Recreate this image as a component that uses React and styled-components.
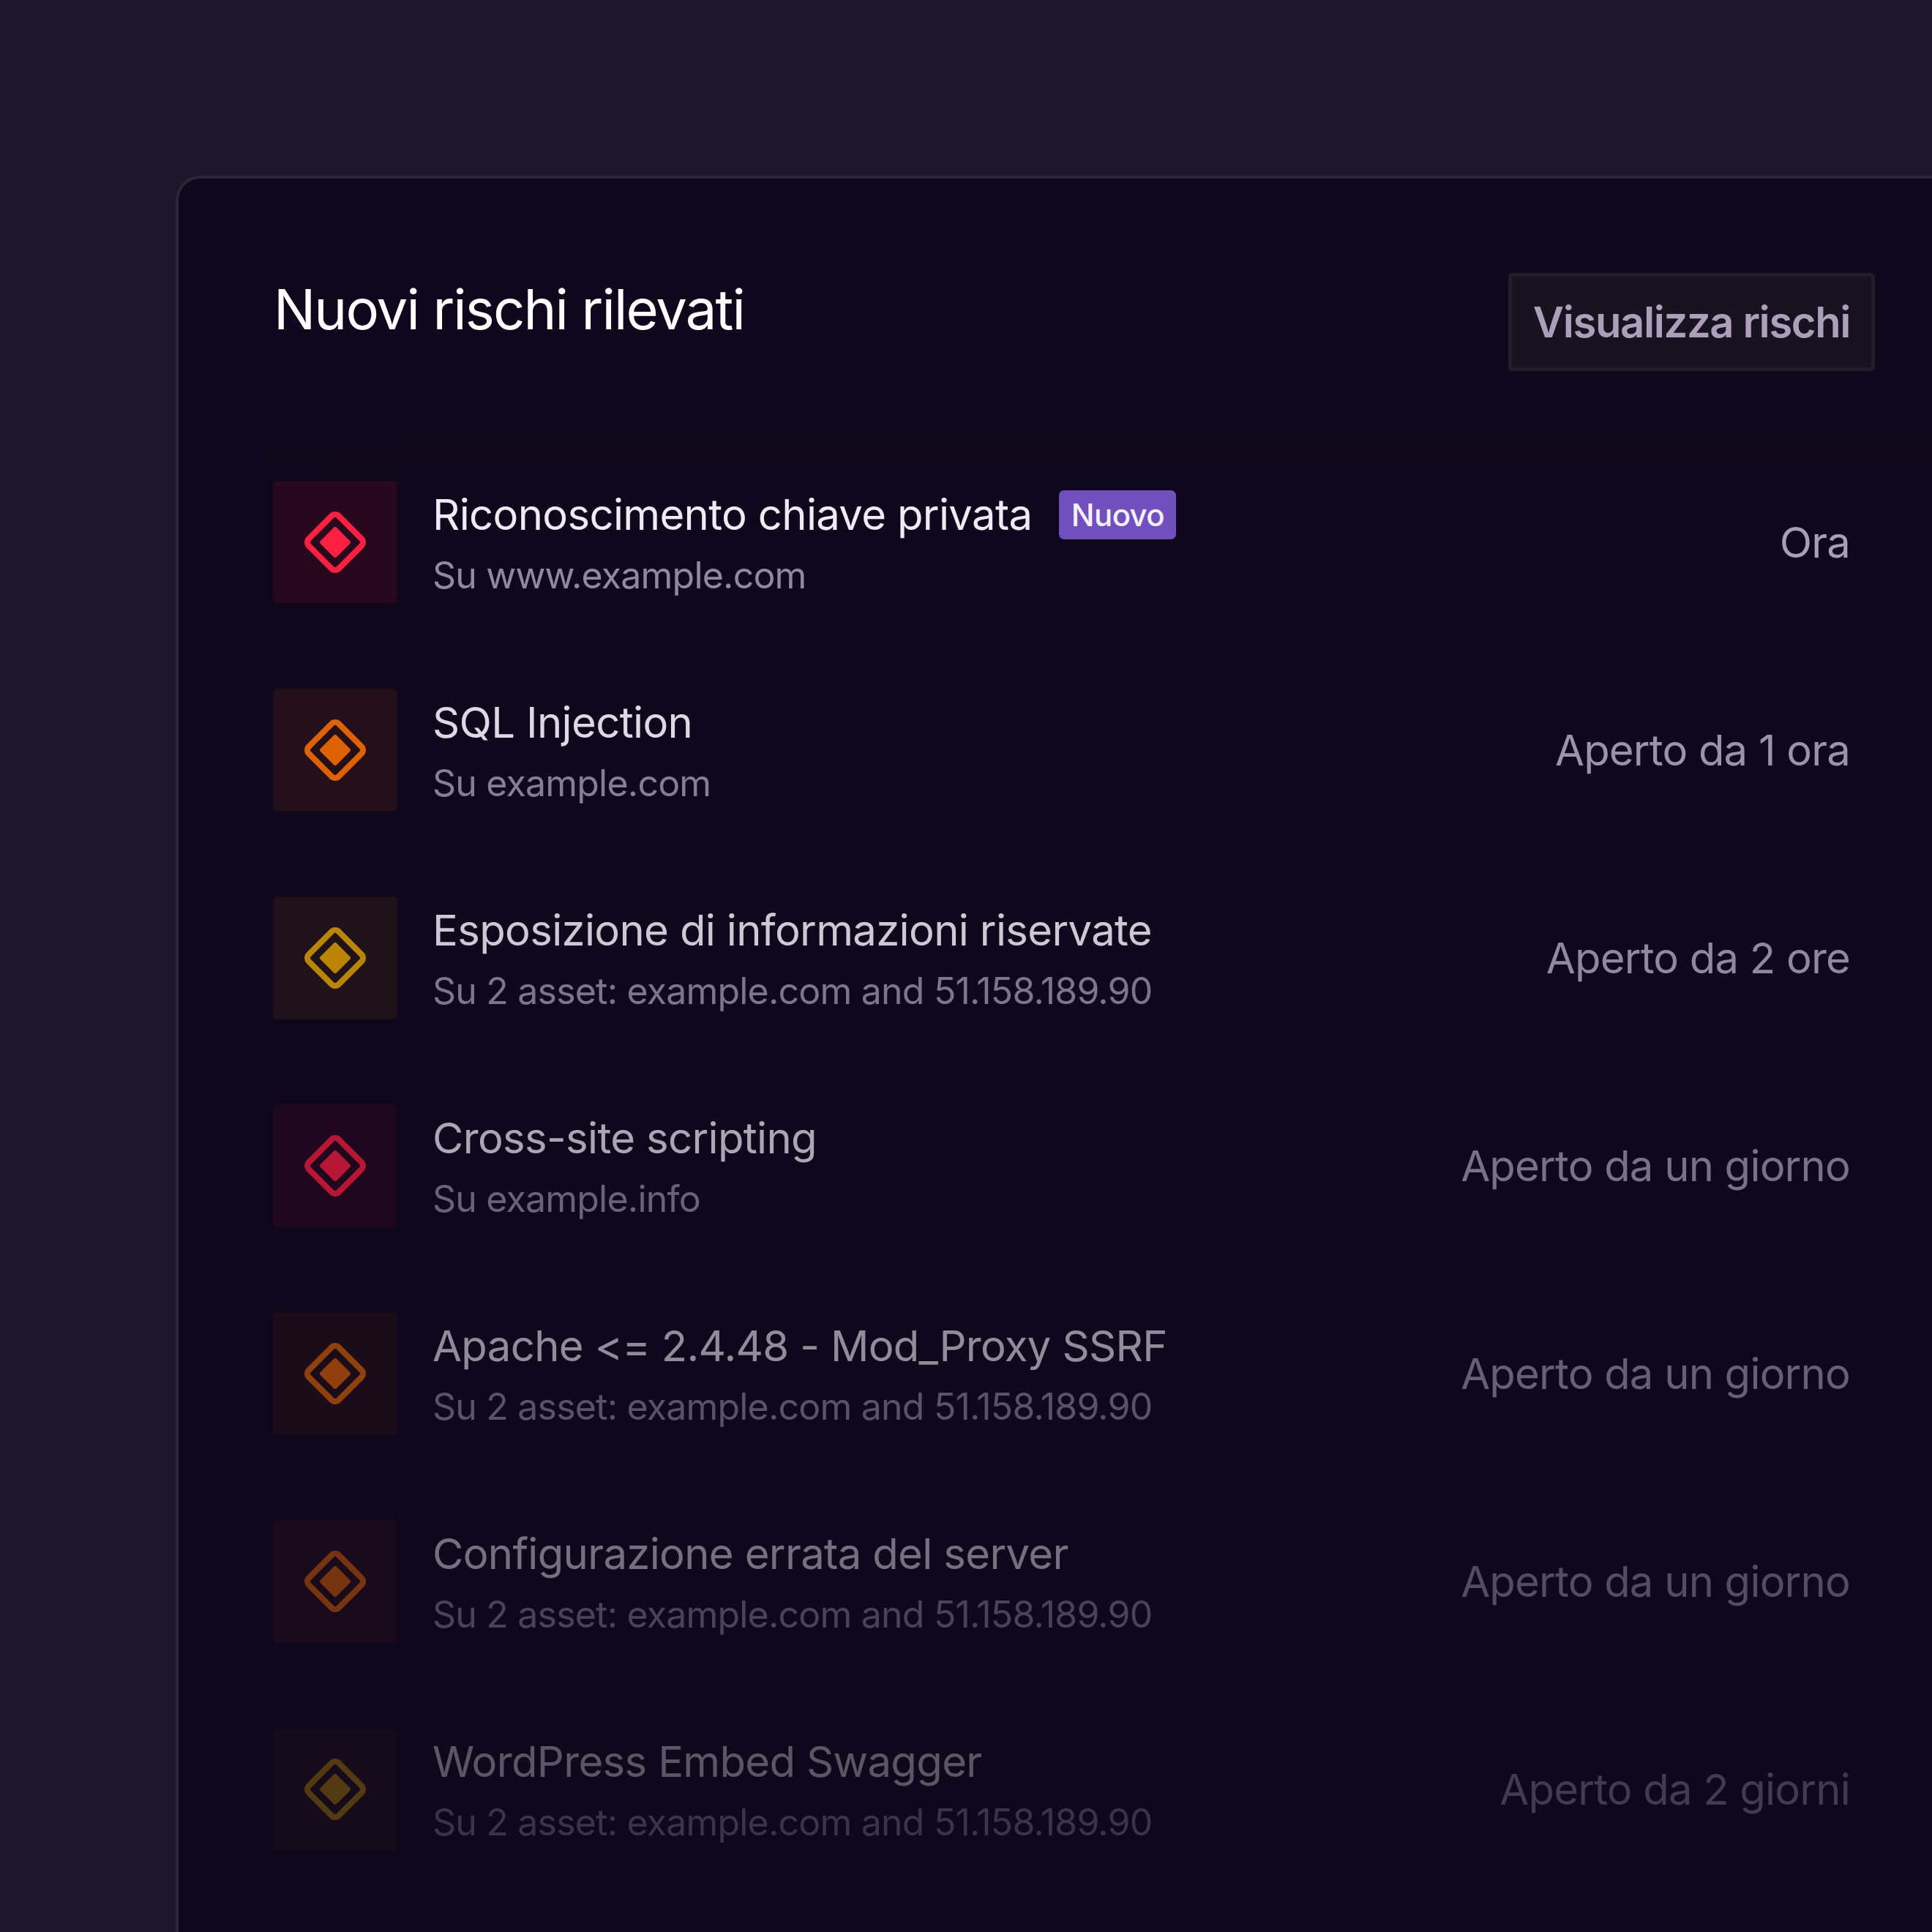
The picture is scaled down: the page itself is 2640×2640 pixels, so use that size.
import React from "react";
import styled, { createGlobalStyle } from "styled-components";

const Global = createGlobalStyle`
  html, body { margin: 0; padding: 0; background: #1e162b; }
  #root { width: 2640px; height: 2640px; overflow: hidden; }
`;

const Page = styled.div`
  width: 2640px;
  height: 2640px;
  box-sizing: border-box;
  padding: 240px 0 0 240px;
  background: #1e162b;
  overflow: hidden;
  font-family: Inter, "Liberation Sans", sans-serif;
`;

const Card = styled.section`
  box-sizing: border-box;
  width: 2400px;
  height: 2400px;
  padding: 0 112px 0 130px;
  background: #0f071c;
  border: solid #2c2639;
  border-width: 4px 0 0 4px;
  border-top-left-radius: 34px;
`;

const Header = styled.header`
  display: flex;
  justify-content: space-between;
  align-items: flex-start;
  padding-top: 129px;
  margin-right: -34px;
`;

const Title = styled.h1`
  margin: 3px 0 0;
  font-size: 76px;
  line-height: 92px;
  font-weight: 400;
  letter-spacing: -1.9px;
  color: #ffffff;
`;

const ViewButton = styled.button`
  box-sizing: border-box;
  width: 501px;
  height: 134px;
  margin: 0;
  padding: 0;
  font: 600 58px/1 Inter, "Liberation Sans", sans-serif;
  letter-spacing: -1.4px;
  color: #ab9fba;
  background: #181221;
  border: 5px solid #221c2e;
  border-radius: 6px;
`;

const Smudge = styled.div`
  height: 24px;
  margin: 104px -112px 0 -60px;
  background: linear-gradient(90deg, #0f071c, #120819 12%, #120819);
  filter: blur(7px);
`;

const List = styled.ul`
  list-style: none;
  margin: 23px 0 0;
  padding: 0;
  display: flex;
  flex-direction: column;
  gap: 118px;
`;

const Row = styled.li`
  display: flex;
  align-items: center;
  height: 166px;
  opacity: ${(p) => p.$fade};
`;

const Tile = styled.div`
  flex: none;
  width: 168px;
  height: 166px;
  margin-right: 49px;
  display: flex;
  align-items: center;
  justify-content: center;
  border-radius: 4px;
  background: ${(p) => p.$bg};
  box-shadow: 0 0 5px ${(p) => p.$bg};
`;

const Body = styled.div`
  flex: 1;
  display: flex;
  flex-direction: column;
  gap: 19px;
  padding-top: 3px;
`;

const NameLine = styled.div`
  display: flex;
  align-items: center;
  gap: 37px;
`;

const Name = styled.span`
  font-size: 58px;
  line-height: 68px;
  color: #efeaf5;
  letter-spacing: -0.65px;
`;

const Badge = styled.span`
  box-sizing: border-box;
  height: 67px;
  width: 160px;
  display: flex;
  align-items: center;
  justify-content: center;
  font-size: 42px;
  font-weight: 500;
  letter-spacing: -0.6px;
  color: #f6effc;
  background: #7050bc;
  border-radius: 7px;
`;

const Sub = styled.span`
  font-size: 50px;
  line-height: 60px;
  color: #9189a1;
  letter-spacing: -0.8px;
`;

const Time = styled.span`
  font-size: 58px;
  line-height: 68px;
  color: #a89eb5;
  letter-spacing: -0.8px;
`;

const Diamond = ({ color }) => (
  <svg width="90" height="90" viewBox="0 0 90 90" fill="none">
    <rect x="16.1" y="16.1" width="57.8" height="57.8" rx="7" transform="rotate(45 45 45)" stroke={color} strokeWidth="8" />
    <rect x="29.3" y="29.3" width="31.4" height="31.4" rx="3" transform="rotate(45 45 45)" fill={color} />
  </svg>
);

const RED = { c: "#ff1f40", bg: "#27091e" };
const ORANGE = { c: "#f06a00", bg: "#25111a" };
const YELLOW = { c: "#d89c00", bg: "#241419" };

const rows = [
  { name: "Riconoscimento chiave privata", sub: "Su www.example.com", time: "Ora", tone: RED, fade: 1, badge: "Nuovo" },
  { name: "SQL Injection", sub: "Su example.com", time: "Aperto da 1 ora", tone: ORANGE, fade: 0.92 },
  { name: "Esposizione di informazioni riservate", sub: "Su 2 asset: example.com and 51.158.189.90", time: "Aperto da 2 ore", tone: YELLOW, fade: 0.85 },
  { name: "Cross-site scripting", sub: "Su example.info", time: "Aperto da un giorno", tone: RED, fade: 0.7 },
  { name: "Apache <= 2.4.48 - Mod_Proxy SSRF", sub: "Su 2 asset: example.com and 51.158.189.90", time: "Aperto da un giorno", tone: ORANGE, fade: 0.58 },
  { name: "Configurazione errata del server", sub: "Su 2 asset: example.com and 51.158.189.90", time: "Aperto da un giorno", tone: ORANGE, fade: 0.46 },
  { name: "WordPress Embed Swagger", sub: "Su 2 asset: example.com and 51.158.189.90", time: "Aperto da 2 giorni", tone: YELLOW, fade: 0.34 },
];

export default function App() {
  return (
    <Page>
      <Global />
      <Card>
        <Header>
          <Title>Nuovi rischi rilevati</Title>
          <ViewButton>Visualizza rischi</ViewButton>
        </Header>
        <Smudge />
        <List>
          {rows.map((r) => (
            <Row key={r.name} $fade={r.fade}>
              <Tile $bg={r.tone.bg}>
                <Diamond color={r.tone.c} />
              </Tile>
              <Body>
                <NameLine>
                  <Name>{r.name}</Name>
                  {r.badge && <Badge>{r.badge}</Badge>}
                </NameLine>
                <Sub>{r.sub}</Sub>
              </Body>
              <Time>{r.time}</Time>
            </Row>
          ))}
        </List>
      </Card>
    </Page>
  );
}
